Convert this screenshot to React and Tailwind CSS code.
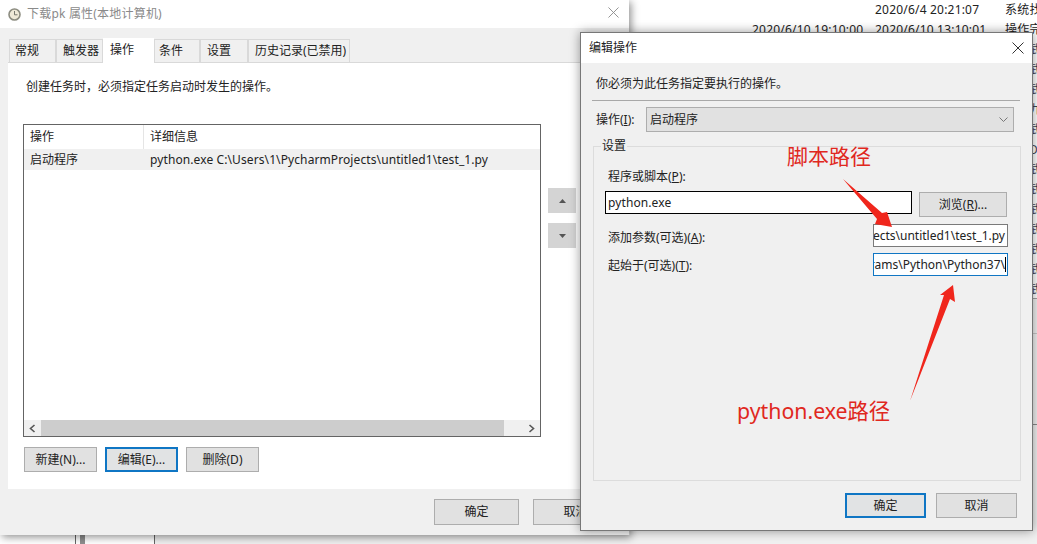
import React from "react";

const U = ({ children }) => <span className="underline">{children}</span>;

function Btn({ children, focus, className = "" }) {
  return (
    <div
      className={`flex items-center justify-center text-[12px] text-[#222] ${
        focus ? "border-2 border-[#0f76c4] bg-[#e1e3e4]" : "border border-[#adadad] bg-[#e1e1e1]"
      } ${className}`}
    >
      {children}
    </div>
  );
}

function Tab({ children, active, w, pl }) {
  return active ? (
    <div className={`${w} ${pl} h-[25px] -mb-px bg-white flex pt-[3px] text-[12px] text-[#222] z-10`}>{children}</div>
  ) : (
    <div className={`${w} ${pl} h-[23px] bg-[#f0f0f0] border border-b-0 border-[#d9d9d9] flex items-center text-[12px] text-[#222] whitespace-nowrap`}>{children}</div>
  );
}

function Close({ color, size }) {
  return (
    <svg width={size} height={size} viewBox="0 0 12 12" fill="none" stroke={color} strokeWidth="1">
      <path d="M0.5 0.5 L11.5 11.5 M11.5 0.5 L0.5 11.5" />
    </svg>
  );
}

const dateRows = [
  ["", "2020/6/4 20:21:07", "系统找"],
  ["2020/6/10 19:10:00", "2020/6/10 13:10:01", "操作完"],
];

export default function App() {
  return (
    <div className="relative w-[1037px] h-[544px] overflow-hidden bg-white font-['Noto_Sans','Noto_Sans_CJK_SC',sans-serif]">
      {/* backdrop: task list behind the dialogs */}
      <div className="flex flex-col items-end h-full">
        <div className="flex-1 w-[407px] flex flex-col pt-0">
          <div className="flex flex-col h-[298px] overflow-hidden">
            {dateRows.map((r, i) => (
              <div key={i} className="flex h-[20px] shrink-0 items-center text-[12px] text-[#222] whitespace-nowrap tracking-[0.2px]">
                <div className="w-[123px] ml-[122px] shrink-0">{r[0]}</div>
                <div className="w-[130px] shrink-0">{r[1]}</div>
                <div>{r[2]}</div>
              </div>
            ))}
            {["武","武","武","九","武","D","武","武","武","武","武","武","武"].map((g, i) => (
              <div key={i} className="flex h-[20px] shrink-0 items-center text-[12px] text-[#445] overflow-hidden pl-[399px]">{g}</div>
            ))}
          </div>
          <div className="flex-1 bg-[#f0f0f0] border-t border-[#a0a0a0] flex flex-col">
            <div className="h-[35px] border-b border-[#c8c8c8]" />
            <div className="h-[91px] border-b border-[#8a8a8a]" />
          </div>
        </div>
      </div>
      <div className="absolute left-0 bottom-0 w-[630px] h-[9px] bg-white flex">
        <div className="w-[75px]" />
        <div className="w-px bg-[#666]" />
        <div className="w-[4px]" />
        <div className="w-[5px] bg-[#8f8f8f]" />
        <div className="w-[69px]" />
        <div className="w-px bg-[#666]" />
        <div className="flex-1 bg-[#efefef]" />
      </div>

      {/* properties window */}
      <div className="absolute left-0 top-0 w-[629px] h-[535px] flex flex-col bg-[#f0f0f0] shadow-[2px_2px_8px_rgba(0,0,0,0.45)]">
        <div className="h-[28px] bg-white flex items-center pl-[8px] pr-[10px] text-[12px] text-[#8a8a8a]">
          <svg width="13" height="13" viewBox="0 0 13 13">
            <circle cx="6.5" cy="6.5" r="5.5" fill="#efe9d8" stroke="#8c8c80" strokeWidth="1.6" />
            <path d="M6.5 3 V6.8 H9.5" fill="none" stroke="#77776e" strokeWidth="1" />
          </svg>
          <span className="ml-[6px] tracking-[0.2px]">下载pk 属性(本地计算机)</span>
          <div className="ml-auto -mt-[3px]"><Close color="#8c8c8c" size={11} /></div>
        </div>
        <div className="flex flex-col flex-1 px-[8px] pt-[10px]">
          <div className="flex items-end pl-[1px] h-[24px]">
            <Tab w="w-[47px]" pl="pl-[5px]">常规</Tab>
            <Tab w="w-[47px]" pl="pl-[6px]">触发器</Tab>
            <Tab w="w-[51px]" pl="pl-[7px]" active>操作</Tab>
            <Tab w="w-[46px]" pl="pl-[4px]">条件</Tab>
            <Tab w="w-[48px]" pl="pl-[6px]">设置</Tab>
            <Tab w="w-[102px]" pl="pl-[6px]">历史记录(已禁用)</Tab>
          </div>
          <div className="h-[427px] bg-white border-t border-[#d9d9d9] pl-[15px] flex flex-col">
            <div className="mt-[15px] h-[18px] pl-[3px] flex items-center text-[12px] text-[#222]">创建任务时，必须指定任务启动时发生的操作。</div>
            <div className="mt-[28px] flex">
              <div className="w-[518px] h-[313px] border border-[#646464] flex flex-col">
                <div className="h-[24px] flex text-[12px] text-[#222]">
                  <div className="w-[120px] pl-[6px] flex items-center border-r border-[#e5e5e5]">操作</div>
                  <div className="pl-[6px] flex items-center">详细信息</div>
                </div>
                <div className="h-[21px] flex bg-[#f0f0f0] text-[12px] text-[#222] whitespace-nowrap">
                  <div className="w-[121px] pl-[6px] flex items-center">启动程序</div>
                  <div className="pl-[5px] flex items-center tracking-[0.1px]">python.exe C:\Users\1\PycharmProjects\untitled1\test_1.py</div>
                </div>
                <div className="flex-1" />
                <div className="h-[16px] bg-[#f0f0f0] flex items-center">
                  <div className="w-[17px] flex justify-center">
                    <svg width="7" height="9" viewBox="0 0 7 9" fill="none" stroke="#555" strokeWidth="1.6"><path d="M5.5 1 L1.5 4.5 L5.5 8" /></svg>
                  </div>
                  <div className="w-[463px] h-full bg-[#cdcdcd]" />
                  <div className="flex-1 flex justify-end pr-[5px]">
                    <svg width="7" height="9" viewBox="0 0 7 9" fill="none" stroke="#555" strokeWidth="1.6"><path d="M1.5 1 L5.5 4.5 L1.5 8" /></svg>
                  </div>
                </div>
              </div>
              <div className="ml-[7px] pt-[64px] flex flex-col gap-[10px]">
                <div className="w-[28px] h-[25px] bg-[#d4d4d4] flex items-center justify-center">
                  <svg width="7" height="4" viewBox="0 0 7 4"><path d="M0 4 L3.5 0 L7 4 Z" fill="#555" /></svg>
                </div>
                <div className="w-[28px] h-[25px] bg-[#d4d4d4] flex items-center justify-center">
                  <svg width="7" height="4" viewBox="0 0 7 4"><path d="M0 0 L3.5 4 L7 0 Z" fill="#555" /></svg>
                </div>
              </div>
            </div>
            <div className="mt-[10px] ml-[1px] flex gap-[8px]">
              <Btn className="w-[73px] h-[25px]">新建(N)...</Btn>
              <Btn className="w-[73px] h-[25px]" focus>编辑(E)...</Btn>
              <Btn className="w-[73px] h-[25px]">删除(D)</Btn>
            </div>
          </div>
          <div className="mt-[10px] ml-[426px] flex gap-[14px]">
            <Btn className="w-[85px] h-[26px]">确定</Btn>
            <Btn className="w-[85px] h-[26px]">取消</Btn>
          </div>
        </div>
      </div>

      {/* edit action dialog */}
      <div className="absolute left-[580px] top-[32px] w-[453px] h-[499px] flex flex-col bg-[#f0f0f0] border border-[#777] shadow-[0_0_10px_rgba(0,0,0,0.4)]">
        <div className="h-[30px] bg-white flex items-center pl-[8px] pr-[8px] text-[12px] text-[#222]">
          <span>编辑操作</span>
          <div className="ml-auto"><Close color="#333" size={12} /></div>
        </div>
        <div className="flex flex-col flex-1 pl-[11px] pr-[11px]">
          <div className="h-[38px] pl-[4px] pt-[5px] flex items-center border-b border-[#a8a8a8] text-[12px] text-[#222] mr-[1px]">你必须为此任务指定要执行的操作。</div>
          <div className="mt-[6px] flex items-center pl-[4px] text-[12px] text-[#222]">
            <div className="w-[50px]">操作(<U>I</U>):</div>
            <div className="w-[368px] h-[25px] bg-[#e1e1e1] border border-[#adadad] flex items-center pl-[3px] pr-[5px]">
              <span>启动程序</span>
              <svg className="ml-auto" width="9" height="5" viewBox="0 0 9 5" fill="none" stroke="#777"><path d="M0.5 0.5 L4.5 4.5 L8.5 0.5" /></svg>
            </div>
          </div>
          <div className="relative mt-[14px] ml-px h-[335px] border border-[#dcdcdc] pl-[11px] pr-[13px] pt-[21px] text-[12px] text-[#222]">
            <div className="absolute left-[7px] -top-[10px] bg-[#f0f0f0] px-[1px] leading-[18px]">设置</div>
            <div className="pl-[3px] h-[18px] flex items-center">程序或脚本(<U>P</U>):</div>
            <div className="mt-[5px] flex gap-[7px]">
              <div className="w-[307px] h-[23px] bg-white border border-black flex items-center pl-[2px] tracking-[0.1px]">python.exe</div>
              <Btn className="w-[88px] h-[25px] mt-px">浏览(<U>R</U>)...</Btn>
            </div>
            <div className="mt-[7px] h-[23px] flex justify-between items-center whitespace-nowrap mr-[-1px]">
              <div className="pl-[3px] mt-[4px]">添加参数(可选)(<U>A</U>):</div>
              <div className="w-[135px] h-[23px] bg-white border border-[#7a7a7a] flex justify-end items-center overflow-hidden pr-[2px]">C:\Users\1\PycharmProjects\untitled1\test_1.py</div>
            </div>
            <div className="mt-[6px] h-[23px] flex justify-between items-center whitespace-nowrap mr-[-1px]">
              <div className="pl-[3px] mt-[3px]">起始于(可选)(<U>T</U>):</div>
              <div className="w-[135px] h-[23px] bg-[#fcfeff] border border-[#0f76c4] flex justify-end items-center overflow-hidden pr-px">AppData\Local\Programs\Python\Python37\<span className="w-px h-[15px] bg-black shrink-0" /></div>
            </div>
          </div>
          <div className="mt-[12px] ml-[253px] flex gap-[10px]">
            <Btn className="w-[81px] h-[25px]" focus>确定</Btn>
            <Btn className="w-[81px] h-[25px]">取消</Btn>
          </div>
        </div>
      </div>

      {/* red annotations */}
      <div className="absolute left-[787px] top-[141px] text-[21px] leading-[30px] text-[#e0281e] whitespace-nowrap">脚本路径</div>
      <div className="absolute left-[737px] top-[396px] text-[21.3px] leading-[30px] text-[#e0281e] whitespace-nowrap">python.exe路径</div>
      <svg className="absolute left-0 top-0 pointer-events-none" width="1037" height="544" viewBox="0 0 1037 544">
        <polygon points="843,179 882,213 887,212 892,227 875,224 877,219" fill="#f0261c" />
        <polygon points="910,401 944,295 940,295 953,285 955,302 950,299" fill="#f0261c" />
      </svg>
    </div>
  );
}
